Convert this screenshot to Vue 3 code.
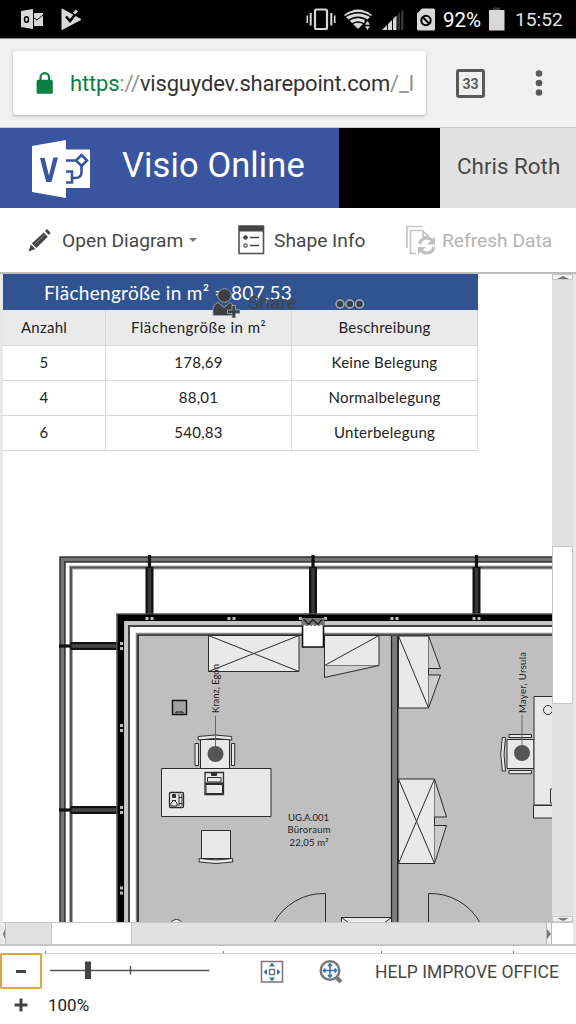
<script setup>
const rows = [
  ['5', '178,69', 'Keine Belegung'],
  ['4', '88,01', 'Normalbelegung'],
  ['6', '540,83', 'Unterbelegung'],
]
const mullionsX = [149.5, 313, 476.5]
const mullionsY = [646, 810]
const jointsX = [149.5, 231.5, 394.5, 476.5]
const jointsY = [646, 728, 810, 890.5]
</script>

<template>
  <div class="screen">
    <header class="status">
      <svg class="status-left" width="90" height="38" viewBox="0 0 90 38">
        <path d="M21 11l12-2v20l-12-2z" fill="#d8d8d8" />
        <path d="M34 13h9v13h-9z" fill="#d8d8d8" />
        <path d="M34 18l3 2 6-5" fill="none" stroke="#000" stroke-width="1" />
        <ellipse cx="26.500" cy="19.500" rx="2" ry="2.800" fill="none" stroke="#000" stroke-width="1.500" />
        <path d="M62 9l19 10.500L62 29.500z" fill="#d8d8d8" stroke="#d8d8d8" stroke-linejoin="round" />
        <path d="M66 16.500l4 4.500 8-10" fill="none" stroke="#000" stroke-width="2.600" />
        <path d="M73 12.500l3-3 2 2-3 3z" fill="#d8d8d8" />
      </svg>
      <svg class="status-mid" width="134" height="38" viewBox="302 0 134 38">
        <rect x="315" y="9.500" width="12" height="19.500" rx="1.500" fill="none" stroke="#d8d8d8" stroke-width="2.200" />
        <path d="M310.700 13v12.500M331.300 13v12.500" stroke="#d8d8d8" stroke-width="2" />
        <path d="M307.300 15.500v7.500M334.700 15.500v7.500" stroke="#d8d8d8" stroke-width="1.600" />
        <path d="M344 15q14-11 28 0L358 29z" fill="#d8d8d8" />
        <path d="M344 17.500q14-9.500 28 0M347.500 21q10.500-7.500 21 0M351 24.500q7-5 14 0" fill="none" stroke="#000" stroke-width="1.300" />
        <path d="M364.500 20h6v10h-6z" fill="#000" />
        <path d="M365 24.700l2.500-3.700 2.500 3.700zM365 26.300l2.500 3.700 2.500-3.700z" fill="#d8d8d8" />
        <path d="M382 30l5-5v5zM388 24l4-4v10h-4zM393 19l3.500-3.500V30H393z" fill="#d8d8d8" />
        <path d="M397.500 14.500l2.500-2.500v18h-2.500zM401 11.500l2.500-2V30H401z" fill="#333" />
        <path d="M422 8.500h11.500q1.500 0 1.500 1.500v19q0 1.500-1.500 1.500h-15q-1.500 0-1.500-1.500V13.500z" fill="#d8d8d8" />
        <circle cx="426" cy="20.500" r="4.700" fill="none" stroke="#000" stroke-width="2" />
        <path d="M423 17.500l6 6" stroke="#000" stroke-width="2" />
      </svg>
      <span class="battery">92%</span>
      <svg class="batt-icon" width="16" height="24" viewBox="0 0 16 24">
        <path d="M4 .5h7V4H4z" fill="#3b3b3b" />
        <path d="M0 3h15.500v20.500H0z" fill="#d8d8d8" />
      </svg>
      <span class="clock">15:52</span>
    </header>

    <div class="browser">
      <div class="url">
        <svg width="18" height="23" viewBox="0 0 18 23">
          <path d="M4.500 9V5.500a4.300 4.300 0 0 1 8.600 0V9" fill="none" stroke="#0b8043" stroke-width="2.200" />
          <rect x=".6" y="7.800" width="16.200" height="14" rx="1.600" fill="#0b8043" />
        </svg>
        <span class="address"><b>https</b><i>://</i>visguydev.sharepoint.com<i>/_l</i></span>
      </div>
      <div class="tabs">33</div>
      <svg class="dots" width="10" height="28" viewBox="0 0 10 28">
        <circle cx="5" cy="4.500" r="3.300" /><circle cx="5" cy="14" r="3.300" /><circle cx="5" cy="23.500" r="3.300" />
      </svg>
    </div>

    <div class="brand">
      <div class="product">
        <svg width="60" height="60" viewBox="31 137 60 60">
          <path d="M66 148.500h24V187H66z" fill="#fff" />
          <g fill="none" stroke="#3955a0" stroke-width="2.600">
            <path d="M66 159.500h11M81.500 164v7q0 6-6 6h-3M66 170.500h6v11h-6" />
            <path d="M81.500 154l5.500 5.500-5.500 5.500-5.500-5.500z" />
          </g>
          <path d="M32 145l34-6v58l-34-6z" fill="#fff" />
          <path d="M40 157h4.700l4.200 17.500 4.500-18H58L51.500 181h-5.300z" fill="#3955a0" />
        </svg>
        <span>Visio Online</span>
      </div>
      <div class="user">Chris Roth</div>
    </div>

    <nav class="toolbar">
      <svg class="pen" width="24" height="24" viewBox="28 228 24 24">
        <path d="M28.500 251.500l2.300-7 4.600 4.500z" fill="#444" />
        <path d="M31.800 243.500l12-11 4 4.200L36.400 248z" fill="#444" />
        <path d="M45 231l2-2 3.500 3.500-1.700 2.500z" fill="#444" />
        <path d="M34.500 244.500l11-10.500" stroke="#888" />
      </svg>
      <span class="t-open">Open Diagram</span>
      <i class="caret"></i>
      <svg class="shape" width="27" height="30" viewBox="0 0 27 30">
        <rect x="1" y="1" width="24.500" height="27.500" fill="#fff" stroke="#555" stroke-width="1.600" />
        <path d="M1 1h24.500v5.500H1z" fill="#444" />
        <circle cx="7.500" cy="12.500" r="2.300" fill="#444" />
        <circle cx="7.500" cy="20.500" r="1.700" fill="none" stroke="#555" stroke-width="1.200" />
        <path d="M12 12.500h9M12 20.500h9" stroke="#444" stroke-width="1.600" />
      </svg>
      <span class="t-shape">Shape Info</span>
      <svg class="refresh" width="31" height="30" viewBox="405 225 31 30">
        <g fill="none" stroke="#c6c6c6" stroke-width="1.700">
          <path d="M407 248v-21.500h15" />
          <path d="M416 253.500h-5.500V230.500H422l7 6" />
          <path d="M423 230v6.500h6" />
        </g>
        <g fill="none" stroke="#c0c0c0" stroke-width="3.200">
          <path d="M419.500 244q1.500-6 7.500-6 3.500 0 5.500 3" />
          <path d="M434 247q-1.500 6-7.500 6-3.500 0-5.500-3" />
        </g>
        <path d="M435 237v7.500h-8zM418 254.500V247h8z" fill="#c0c0c0" />
      </svg>
      <span class="t-refresh">Refresh Data</span>
    </nav>

    <main class="viewer">
      <div class="canvas">
        <div class="table">
          <div class="title"><span>Flächengröße in m² = 807,53</span></div>
          <div class="row head"><span>Anzahl</span><span>Flächengröße in m²</span><span>Beschreibung</span></div>
          <div v-for="r in rows" :key="r[0]" class="row"><span v-for="c in r" :key="c">{{ c }}</span></div>
        </div>
        <svg class="plan" width="549" height="471" viewBox="3 451 549 471">
          <!-- facade -->
          <path d="M62.500 930V559.500H560" fill="none" stroke="#3c3c3c" stroke-width="6.500" />
          <path d="M62.500 930V559.500H560" fill="none" stroke="#757575" stroke-width="3" />
          <path d="M71 930V567.500H560" fill="none" stroke="#aaa" stroke-width="4" />
          <path d="M71 930V567.500H560" fill="none" stroke="#555" stroke-width="2" />
          <g v-for="x in mullionsX" :key="'x' + x">
            <path :d="`M${x} 555v14`" stroke="#111" stroke-width="3.200" />
            <path :d="`M${x} 567v48`" stroke="#111" stroke-width="8" />
            <path :d="`M${x} 568v46`" stroke="#383838" stroke-width="3.500" />
          </g>
          <g v-for="y in mullionsY" :key="'y' + y">
            <path :d="`M59 ${y}h14`" stroke="#111" stroke-width="3.200" />
            <path :d="`M70.500 ${y}h48`" stroke="#111" stroke-width="8" />
            <path :d="`M71.500 ${y}h46`" stroke="#484848" stroke-width="3.500" />
          </g>
          <path d="M117 930V614H560" fill="none" stroke="#555" stroke-width="1.500" />
          <path d="M127 930V624H560" fill="none" stroke="#c6c6c6" stroke-width="6" />
          <path d="M120.800 930V617.800H560" fill="none" stroke="#000" stroke-width="6.500" />
          <path d="M129 930V626H560" fill="none" stroke="#444" stroke-width="2" />
          <g fill="#bbb">
            <template v-for="x in jointsX" :key="'j' + x">
              <path :d="`M${x - 4} 617h3v3h-3zM${x + 1} 617h3v3h-3z`" />
            </template>
            <path d="M299 617h3v3h-3zM324 617h3v3h-3z" />
            <template v-for="y in jointsY" :key="'k' + y">
              <path :d="`M120 ${y - 4}h3v3h-3zM120 ${y + 1}h3v3h-3z`" />
            </template>
          </g>
          <!-- rooms -->
          <path d="M138 930V635H560V930z" fill="#bfbfbf" />
          <path d="M136.500 930V633.500H560" fill="none" stroke="#888" stroke-width="1.500" />
          <path d="M138 930V635H560" fill="none" stroke="#222" stroke-width="1.700" />
          <path d="M391 636h7.500v294H391z" fill="#7d7d7d" />
          <path d="M391.500 636v294M397.700 636v294" stroke="#222" stroke-width="1.300" />
          <!-- furniture -->
          <g fill="#e9e9e9" stroke="#2c2c2c" stroke-width="1">
            <path d="M208.500 635.500h90.500v36h-90.500zL299 671.500M299 635.500l-90.500 36" />
            <path d="M324.500 635.500H379v30H324.500zM324.500 665.500l54.500-30" />
            <path d="M324.500 665.500v12l54.500-12" fill="#ccc" />
            <path d="M398.500 636h30v72h-30zL428.500 708" />
            <path d="M428.500 636l12 32.500h-12M428.500 675h12l-12 33" fill="#ccc" />
            <path d="M398.500 779h36v84.500h-36zL434.500 863.500M434.500 779l-36 84.500" />
            <path d="M434.500 779l12 38h-12M434.500 825.500h12l-12 38" fill="#ccc" />
            <path d="M341.500 917.500h50V930h-50zl8 6M391.500 917.500l-8 6" />
            <path d="M172.500 700.500h14v14h-14z" fill="#a2a2a2" stroke="#111" stroke-width="1.400" />
            <path d="M176 713.500v-1.500h7v1.500" fill="none" stroke="#111" />
            <path d="M200.500 739.500h29v29h-29z" />
            <path d="M198.200 740v-3.500q17-3 33.500 0v3.500q-17-3-33.500 0z" />
            <path d="M195 743.500h3.500v22H195zM231.500 743.500h3.200v22h-3.200z" />
            <path d="M161.500 768.500h109.500v48H161.500z" />
            <path d="M205 772.500h18.500v22H205z" stroke-width="1.300" />
            <path d="M207.500 777.500h13.500v4.500h-13.500zM206 784.500h16.500v9H206z" />
            <path d="M205 783.500h18" stroke-width="2" />
            <path d="M211.500 773h5v2.500h-5z" fill="#333" />
            <rect x="169.500" y="792.500" width="14" height="15" rx="1" stroke-width="1.300" />
            <path d="M172.500 794.500h3v3h-3z" fill="#333" />
            <path d="M179 794v12M182 794v12M179 797.500h3M179 803.500h3M171 806v-3l3-3 3 3v3zM172 800.500h4" />
            <path d="M201.500 830.500h29v28h-29z" />
            <path d="M199.200 858.500v3.500q17 3 33.500 0v-3.500q-17 3-33.500 0z" />
            <circle cx="176.500" cy="926" r="6.500" fill="#fff" />
            <path d="M507 739.500h27v29h-27zM509 734.500h22.500v3H509zM509 770.500h22.500v3.200H509z" />
            <path d="M505.500 737.500h-3.200q-3 17 0 33.500h3.200q-3-17 0-33.500z" />
            <path d="M534 696.500h30V805h-30zM533.500 805.500h30v12.500h-30z" />
            <circle cx="548" cy="710" r="4.500" />
            <path d="M550.500 789h8v14h-8z" />
            <path d="M325.500 922V893.500a57 57 0 0 0-52 30M428.500 922V893.500a57 57 0 0 1 52 30" fill="none" />
          </g>
          <!-- service shaft -->
          <path d="M302.500 619h21v28h-21z" fill="#fff" stroke="#111" stroke-width="1.600" />
          <path d="M302 618h22v8h-22z" fill="#777" />
          <path d="M304 619.500l4.500 5 4.500-5 4.500 5 4.500-5" fill="none" stroke="#222" stroke-width="1.300" />
          <path d="M304 625.500h18" stroke="#ddd" stroke-dasharray="2 2" />
          <!-- occupants -->
          <path d="M215.500 716v31M522 715v31" stroke="#666" />
          <circle cx="215.500" cy="754" r="8" fill="#555" />
          <circle cx="522" cy="753" r="8" fill="#555" />
          <g class="label">
            <text transform="translate(219 713) rotate(-90)" textLength="49">Kranz, Egon</text>
            <text transform="translate(525.500 713) rotate(-90)" textLength="61">Mayer, Ursula</text>
            <text x="288" y="820.500" textLength="41">UG.A.001</text>
            <text x="287.500" y="833.300" textLength="43">Büroraum</text>
            <text x="289.500" y="846" textLength="39">22,05 m²</text>
          </g>
        </svg>
      </div>
      <div class="vscroll">
        <div class="btn up"><i></i></div>
        <div class="vthumb"></div>
        <div class="btn down"><i></i></div>
      </div>
      <div class="hscroll">
        <div class="hbtn left"><i></i></div>
        <div class="hthumb"></div>
        <div class="hbtn right"><i></i></div>
        <div class="corner"></div>
      </div>
      <div class="share">
        <svg width="28" height="30" viewBox="212 288 28 30">
          <g stroke="#a8afba" stroke-width=".8" fill="#3d4043">
            <circle cx="224.500" cy="295.500" r="6.800" />
            <path d="M213 315.500v-7q0-4 5-6l6 5 6-5q3 1 3 5v8z" />
            <path d="M232 305.500h3.500v4.500h4.500v3.500h-4.500v4.500H232v-4.500h-4.500V310h4.500z" />
          </g>
        </svg>
        <span>Share</span>
        <svg class="more" width="32" height="12" viewBox="0 0 32 12">
          <g fill="#3d4043" stroke="#a8afba" stroke-width="1.500">
            <circle cx="6" cy="6" r="4" /><circle cx="15.800" cy="6" r="4" /><circle cx="25.500" cy="6" r="4" />
          </g>
        </svg>
      </div>
    </main>

    <footer class="footer">
      <div class="gap"><i></i><i></i><i></i><i></i></div>
      <div class="controls">
        <button class="minus"><i></i></button>
        <svg class="slider" width="162" height="20" viewBox="49 960 162 20">
          <path d="M50 970.500h159.500" stroke="#555" stroke-width="1.500" />
          <path d="M130.500 966v8.500" stroke="#555" stroke-width="1.500" />
          <path d="M85 961.500h6v17.500h-6z" fill="#444" />
        </svg>
        <svg class="fit" width="24" height="24" viewBox="260 961 24 24">
          <rect x="261.500" y="962.500" width="21" height="20.500" fill="#fff" stroke="#777" stroke-width="1.500" />
          <rect x="269.500" y="970.500" width="5" height="5" fill="none" stroke="#777" stroke-width="1.500" />
          <path d="M269 967.500l3-4 3 4zM269 978.500l3 4 3-4zM267 970v6l-3.500-3zM277 970v6l3.500-3z" fill="#2f6fae" />
        </svg>
        <svg class="zoomfit" width="26" height="26" viewBox="319 960 26 26">
          <path d="M338 979l4 4" stroke="#777" stroke-width="4" />
          <circle cx="331" cy="971.500" r="9.300" fill="#fff" stroke="#777" stroke-width="2.500" />
          <g fill="none" stroke="#2f6fae" stroke-width="1.600">
            <path d="M331 965v13M324.500 971.500h13" />
            <path d="M329 967l2-2 2 2M329 976l2 2 2-2M326.500 969.500l-2 2 2 2M335.500 969.500l2 2-2 2" />
          </g>
        </svg>
        <span class="help">HELP IMPROVE OFFICE</span>
      </div>
      <div class="zoomrow">
        <svg width="14" height="14" viewBox="0 0 14 14"><path d="M7 .5v13M.5 7h13" stroke="#444" stroke-width="3" /></svg>
        <span>100%</span>
      </div>
    </footer>
  </div>
</template>

<style>
html, body { margin: 0; background: #fff; }
</style>

<style scoped>
* { box-sizing: border-box; }
.screen { width: 576px; height: 1024px; overflow: hidden; display: flex; flex-direction: column; font-family: Roboto, "Liberation Sans", sans-serif; color: #484848; background: #fff; }
svg { display: block; flex: none; }
span { white-space: nowrap; }
.status { height: 38px; flex: none; background: #000; display: flex; align-items: center; color: #e2e2e2; }
.status-mid { margin-left: 212px; }
.battery { margin-left: 7px; width: 40px; font-size: 20.500px; color: #fff; line-height: 38px; padding-top: 2px; }
.batt-icon { margin-left: 6px; }
.clock { margin-left: 10px; font-size: 19.200px; line-height: 38px; padding-top: 2px; }
.browser { height: 90px; flex: none; background: #f0f0f0; display: flex; align-items: center; border-top: 1px solid #888; border-bottom: 1px solid #ccc; padding-left: 13px; }
.url { width: 413px; height: 64px; background: #fff; border-radius: 3px; box-shadow: 0 1px 3px rgba(0,0,0,.28); display: flex; align-items: center; padding-left: 23px; }
.address { margin-left: 16px; font-size: 22px; letter-spacing: -.18px; color: #333; line-height: 30px; padding-top: 1px; }
.address b { font-weight: 400; color: #0b8043; }
.address i { font-style: normal; color: #929292; }
.tabs { margin-left: 30px; width: 29px; height: 29px; border: 3px solid #5a5a5a; border-radius: 3px; text-align: center; font-weight: 700; font-size: 14px; line-height: 24px; color: #5a5a5a; }
.dots { margin-left: 49px; fill: #5a5a5a; }
.brand { height: 80px; flex: none; display: flex; background: #000; }
.product { width: 339px; background: #3955a0; display: flex; align-items: center; padding-left: 31px; color: #fff; font-size: 34.500px; letter-spacing: .1px; }
.product span { margin-left: 31px; margin-top: -6px; }
.user { margin-left: 101px; width: 136px; background: #e1e1e1; padding-left: 17px; font-size: 22.400px; line-height: 76px; white-space: nowrap; }
.toolbar { height: 64px; flex: none; display: flex; align-items: center; padding-left: 28px; font-size: 19.200px; }
.t-open { margin-left: 10px; width: 122px; }
.caret { margin-left: 5px; border: 4.500px solid transparent; border-top-color: #777; border-bottom: 0; }
.shape { margin-left: 41px; }
.t-shape { margin-left: 9px; width: 92px; }
.refresh { margin-left: 39px; }
.t-refresh { margin-left: 6px; color: #b4b4b4; }
.viewer { position: relative; height: 674px; flex: none; border-top: 2px solid #bdbdbd; border-bottom: 2px solid #c6c6c6; background: #e8e8e8; padding: 0 3px; display: grid; grid-template: 648px 22px / 549px 21px; }
.canvas { background: #fff; overflow: hidden; display: flex; flex-direction: column; justify-content: space-between; }
.table { width: 475px; font-family: Lato, "Noto Sans", sans-serif; color: #222; }
.title { height: 36px; background: #31538f; color: #fff; font-size: 19px; letter-spacing: .3px; line-height: 37px; padding-left: 41px; }
.row { display: grid; grid-template-columns: 103px 186px 186px; height: 35.100px; font-size: 15px; line-height: 35px; letter-spacing: .25px; text-align: center; }
.row span { border-right: 1px solid #d9d9d9; border-bottom: 1px solid #d9d9d9; }
.row span:first-child { padding-right: 20px; }
.head { background: #eaeaea; }
.head span:nth-child(2) { letter-spacing: .5px; }
.label { font-family: Lato, "Noto Sans", sans-serif; font-size: 9.500px; fill: #222; }
.vscroll { background: #e1e1e1; display: flex; flex-direction: column; }
.btn { height: 6px; background: #f2f2f2; border: 1px solid #c8c8c8; display: flex; justify-content: center; overflow: hidden; }
.btn i { border: 6px solid transparent; border-top-width: 0; border-bottom: 3px solid #777; align-self: flex-end; height: 0; }
.btn.down i { border-bottom: 0; border-top: 3px solid #777; align-self: center; }
.vthumb { margin-top: 266px; height: 158px; background: #fff; border: 1px solid #c6c6c6; }
.down { margin-top: auto; }
.hscroll { grid-column: 1 / 3; background: #e1e1e1; display: flex; border-top: 1px solid #c6c6c6; }
.hbtn { width: 3px; background: #f2f2f2; border-right: 1px solid #bbb; display: flex; align-items: center; overflow: hidden; }
.hbtn i { width: 0; border: 5px solid transparent; border-left: 4px solid #777; border-right: 0; }
.left i { border-left: 0; border-right: 2px solid #777; }
.hthumb { margin-left: 45px; width: 81px; background: #fff; border: solid #c6c6c6; border-width: 0 1px; }
.right { width: 6px; margin-left: auto; border-left: 1px solid #bbb; }
.corner { width: 21px; background: #fff; }
.share { position: absolute; left: 212px; top: 14px; display: flex; align-items: center; font-size: 19.200px; color: #444; }
.share span { margin-left: 8px; width: 49px; line-height: 30px; }
.more { margin-left: 37px; margin-top: 2px; }
.footer { height: 78px; flex: none; }
.gap { height: 8px; display: flex; border-bottom: 1px solid #d2d2d2; align-items: flex-end; }
.gap i { width: 1px; height: 2px; background: #777; margin-left: 45px; }
.gap i:nth-child(2) { margin-left: 177px; }
.gap i:nth-child(3) { margin-left: 157px; }
.gap i:nth-child(4) { margin-left: 131px; }
.controls { display: flex; height: 36px; align-items: center; margin-top: -1px; }
.minus { width: 42px; height: 36px; border: 2px solid #d9a73c; border-radius: 2px; background: #fff; padding: 0; display: flex; align-items: center; justify-content: center; }
.minus i { width: 10px; height: 3px; background: #444; }
.slider { margin-left: 7px; margin-top: -2px; }
.fit { margin-left: 49px; margin-top: 2px; }
.zoomfit { margin-left: 34px; margin-top: 2px; }
.help { margin-left: 31px; font-size: 17.500px; padding-top: 1px; }
.zoomrow { display: flex; align-items: center; height: 28px; margin-top: 2px; padding-left: 14px; font-size: 17px; color: #222; }
.zoomrow span { margin-left: 20px; }
</style>
